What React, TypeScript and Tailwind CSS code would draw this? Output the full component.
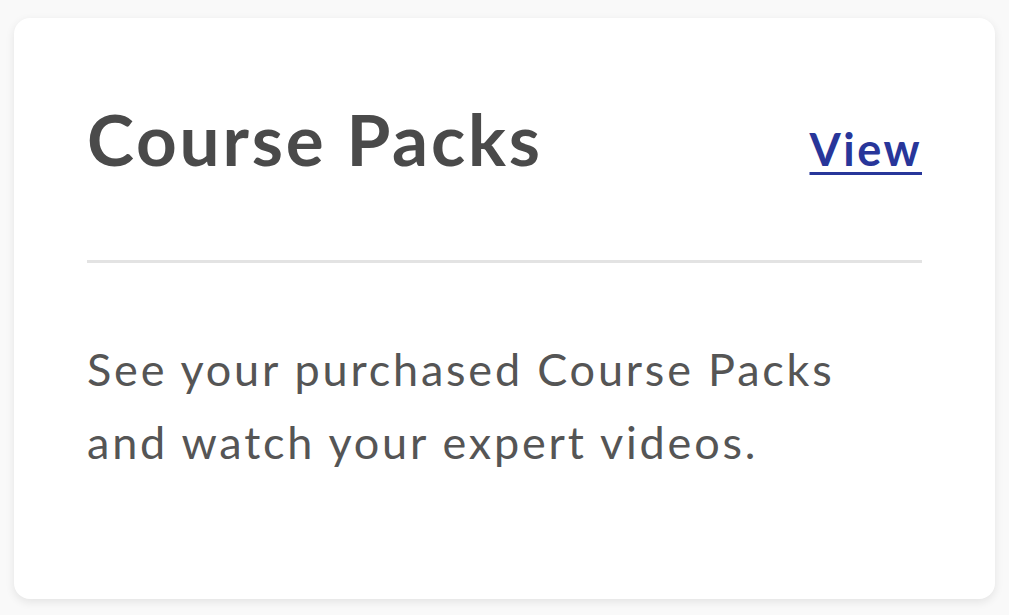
export default function App() {
  return (
    <div className="min-h-[615px] bg-[#f9f9f9] pt-[18px] px-[14px] pb-[17px] font-['Lato',sans-serif]">
      <div className="rounded-[16px] bg-white shadow-[0_3px_10px_rgba(0,0,0,0.09)] pt-[68px] px-[73px] pb-[120px]">
        <div className="flex items-baseline justify-between">
          <h2 className="text-[71px] font-bold tracking-[2.8px] text-[#4a4a4a]">Course Packs</h2>
          <a href="#" className="text-[45px] font-bold tracking-[2.5px] text-[#28369a] underline decoration-[3px] underline-offset-[6px]">
            View
          </a>
        </div>
        <div className="mt-[67px] h-[3px] bg-[#e3e3e3]" />
        <p className="mt-[70px] text-[45px] leading-[73px] tracking-[2.8px] text-[#555555]">
          See your purchased Course Packs
          <br />
          and watch your expert videos.
        </p>
      </div>
    </div>
  )
}
